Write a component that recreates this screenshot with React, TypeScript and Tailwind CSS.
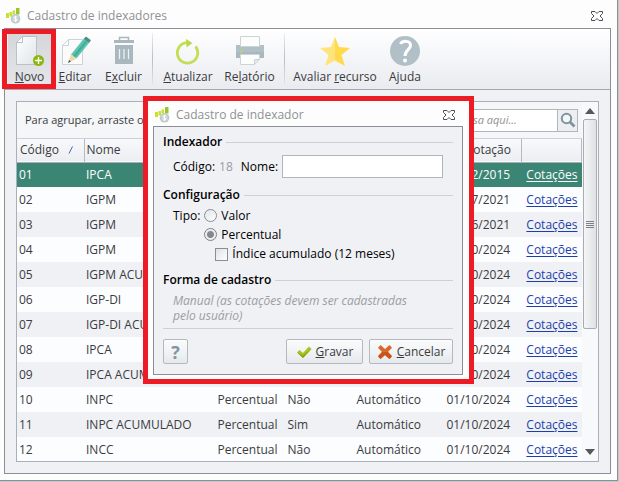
import type { ReactNode } from 'react';

type Row = {
  code: string;
  name: string;
  type: string;
  accumulated: string;
  update: string;
  date: string;
};

const rows: Row[] = [
  { code: '01', name: 'IPCA', type: 'Percentual', accumulated: 'Não', update: 'Automático', date: '01/12/2015' },
  { code: '02', name: 'IGPM', type: 'Percentual', accumulated: 'Não', update: 'Automático', date: '01/07/2021' },
  { code: '03', name: 'IGPM', type: 'Percentual', accumulated: 'Não', update: 'Automático', date: '01/06/2021' },
  { code: '04', name: 'IGPM', type: 'Percentual', accumulated: 'Não', update: 'Automático', date: '01/10/2024' },
  { code: '05', name: 'IGPM ACUMULADO', type: 'Percentual', accumulated: 'Sim', update: 'Automático', date: '01/10/2024' },
  { code: '06', name: 'IGP-DI', type: 'Percentual', accumulated: 'Não', update: 'Automático', date: '01/10/2024' },
  { code: '07', name: 'IGP-DI ACUMULADO', type: 'Percentual', accumulated: 'Sim', update: 'Automático', date: '01/10/2024' },
  { code: '08', name: 'IPCA', type: 'Percentual', accumulated: 'Não', update: 'Automático', date: '01/10/2024' },
  { code: '09', name: 'IPCA ACUMULADO', type: 'Percentual', accumulated: 'Sim', update: 'Automático', date: '01/10/2024' },
  { code: '10', name: 'INPC', type: 'Percentual', accumulated: 'Não', update: 'Automático', date: '01/10/2024' },
  { code: '11', name: 'INPC ACUMULADO', type: 'Percentual', accumulated: 'Sim', update: 'Automático', date: '01/10/2024' },
  { code: '12', name: 'INCC', type: 'Percentual', accumulated: 'Não', update: 'Automático', date: '01/10/2024' },
];

function LogoIcon() {
  return (
    <svg className="h-4 w-4 shrink-0" viewBox="0 0 16 16" aria-hidden="true">
      <path d="M0 5h3v5H0zM3.500 4H6v4.500H3.500zM6.500 2.500H9v4H6.500z" fill="#cbe02f" />
      <path d="M10 0h3.500v6.500H10z" fill="#9bc62a" />
      <circle cx="9.500" cy="10.800" r="4.800" fill="#bcc7cb" />
      <circle cx="9.500" cy="10.800" r="3.700" fill="#c9d2d6" />
      <path
        d="M11.200 9.200c-.6-.9-3.200-.9-3.200.4 0 1.500 3.200.8 3.200 2.300 0 1.300-2.600 1.300-3.400.3M9.500 7.800v6"
        fill="none"
        stroke="#fff"
        strokeWidth="1"
      />
    </svg>
  );
}

function CloseIcon() {
  return (
    <svg className="h-3 w-3" viewBox="0 0 12 12" aria-hidden="true">
      <path
        d="M.5 1.500h3.500L6 3.500l2-2h3.500v2L9 6l2.500 2.500v2H8l-2-2-2 2H.5v-2L3 6 .5 3.500z"
        fill="#fff"
        stroke="#4b5055"
        strokeWidth="1"
      />
    </svg>
  );
}

function NewIcon() {
  return (
    <svg className="h-8 w-8" viewBox="0 0 32 32" aria-hidden="true">
      <defs>
        <linearGradient id="paper" x1="0" y1="0" x2="1" y2="1">
          <stop offset="0" stopColor="#fff" />
          <stop offset="1" stopColor="#dfe4e8" />
        </linearGradient>
      </defs>
      <path d="M8.500 1.500h14v28h-20v-22z" fill="url(#paper)" stroke="#b7c3c9" />
      <path d="M8.500 1.500v6h-6z" fill="#fff" stroke="#b7c3c9" />
      <circle cx="24.500" cy="25.500" r="5.500" fill="#8ab70d" />
      <path d="M24.500 22v7M21 25.500h7" stroke="#fff" strokeWidth="1.400" />
    </svg>
  );
}

function EditIcon() {
  return (
    <svg className="h-8 w-8" viewBox="0 0 32 32" aria-hidden="true">
      <path d="M9.500 4.500h14v25h-20v-19z" fill="#fbfbfc" stroke="#cdd4d8" />
      <path d="M9.500 4.500v6h-6z" fill="#fff" stroke="#cdd4d8" />
      <path d="M12 19.500 24.500 4l5.500 4-12.500 15.500-5.500-4z" fill="#5ec4b3" />
      <path d="m14 21 12.500-15.500 1.800 1.300L16 22.500z" fill="#45ad9b" />
      <path d="M24.500 4 27 1.500l5 3.700-2 2.800z" fill="#4b8f86" />
      <path d="m12 19.500 5.500 4L9 28z" fill="#ecd6ae" />
      <path d="m10 25 2 1.500L9 28z" fill="#4a5458" />
    </svg>
  );
}

function TrashIcon() {
  return (
    <svg className="h-8 w-8" viewBox="0 0 32 32" aria-hidden="true">
      <path d="M11.500 5.500v-3h9v3" fill="none" stroke="#a9b7be" strokeWidth="1.500" />
      <path d="M6 5h20v3H6zM7 10h18v19H7z" fill="#a9b7be" />
      <path d="M11.500 14v10M16 14v10M20.500 14v10" stroke="#eef1f3" strokeWidth="1.300" />
    </svg>
  );
}

function RefreshIcon() {
  return (
    <svg className="h-8 w-8" viewBox="0 0 32 32" aria-hidden="true">
      <path d="M23.500 11.500A10.200 10.200 0 1 1 15 7.700" fill="none" stroke="#c3dd55" strokeWidth="2.800" />
      <path d="M14 4 20.500 8l-6 4.500z" fill="#bcd94a" />
    </svg>
  );
}

function PrinterIcon() {
  return (
    <svg className="h-8 w-8" viewBox="0 0 32 32" aria-hidden="true">
      <path d="M2 10h28v13H2z" fill="#b1bfc6" />
      <path d="M2 17h28v6H2z" fill="#a9b8bf" />
      <path d="M6.500 1.500h19v10h-19zM6.500 19.500h19v5l-5 5h-14z" fill="#fdfdfd" stroke="#ccd4d8" />
      <path d="M20.500 29.500v-5h5z" fill="#e6eaec" stroke="#ccd4d8" />
      <circle cx="7" cy="16.500" r="1.200" fill="#c2dc45" />
    </svg>
  );
}

function StarIcon() {
  return (
    <svg className="h-8 w-8" viewBox="0 0 32 32" aria-hidden="true">
      <path d="m16 2 4 10 11 1-8.500 7L26 31l-10-5.500z" fill="#ffdb4b" />
      <path d="M16 2 12 12 1 13l8.500 7L6 31l10-5.500z" fill="#ffe47d" />
    </svg>
  );
}

function HelpIcon() {
  return (
    <svg className="h-8 w-8" viewBox="0 0 32 32" aria-hidden="true">
      <circle cx="16" cy="16" r="15" fill="#b1c0c7" />
      <path
        d="M11.500 9c1.500-3.500 10-4 10 1.500 0 4-5.500 4.500-5.500 10.500"
        fill="none"
        stroke="#fff"
        strokeWidth="3"
      />
      <circle cx="16" cy="25.500" r="2" fill="#fff" />
    </svg>
  );
}

function SearchIcon() {
  return (
    <svg className="h-4 w-4" viewBox="0 0 16 16" aria-hidden="true">
      <circle cx="6.500" cy="6.500" r="4.700" fill="#f4f6f8" stroke="#7f959d" strokeWidth="2" />
      <path d="m10 10 4.500 4.500" stroke="#7f959d" strokeWidth="2.800" />
    </svg>
  );
}

function CheckIcon() {
  return (
    <svg className="h-4 w-4" viewBox="0 0 16 16" aria-hidden="true">
      <path d="M1 8.500 3.500 6 7 9l6-6.500L15.500 5 7 14z" fill="#a4c520" />
      <path d="m1 8.500 6 3 8.500-6.500L7 14z" fill="#86a80f" />
    </svg>
  );
}

function CancelIcon() {
  return (
    <svg className="h-4 w-4" viewBox="0 0 16 16" aria-hidden="true">
      <path
        d="m3.500 1 4.500 4 4.500-4L15 3.800 11 8l4 4.200-2.500 2.800L8 11l-4.500 4L1 12.200 5 8 1 3.800z"
        fill="#d9692b"
      />
      <path d="M5 8h6l4 4.200-2.500 2.800L8 11l-4.500 4L1 12.200z" fill="#c9541a" />
    </svg>
  );
}

function ToolButton({
  icon,
  width,
  pressed = false,
  children,
}: {
  icon: ReactNode;
  width: string;
  pressed?: boolean;
  children: ReactNode;
}) {
  return (
    <button
      type="button"
      className={`flex shrink-0 flex-col items-center gap-0.5 whitespace-nowrap pt-1.5 ${width} ${
        pressed ? 'bg-gradient-to-b from-[#d3d5d8] to-[#e6e7ea]' : ''
      }`}
    >
      {icon}
      <span className="leading-4">{children}</span>
    </button>
  );
}

function Separator() {
  return <div className="mx-1 my-1 w-px shrink-0 bg-gradient-to-b from-[#eceef1] via-[#b9bcc4] to-[#e3e5e9]" />;
}

function TitleBar({ title, height }: { title: string; height: string }) {
  return (
    <div className={`flex items-center justify-between ${height}`}>
      <div className="flex items-center gap-[5px]">
        <LogoIcon />
        <h2 className="text-[#8f9194]">{title}</h2>
      </div>
      <button type="button" aria-label="Fechar">
        <CloseIcon />
      </button>
    </div>
  );
}

function SectionTitle({ children }: { children: ReactNode }) {
  return (
    <div className="flex items-center gap-1">
      <h3 className="font-semibold leading-4 text-black">{children}</h3>
      <div className="h-px flex-1 bg-[#cfd1d6]" />
    </div>
  );
}

function Toolbar() {
  return (
    <div className="relative flex h-[61px] border-b border-[#a5a8b0] bg-gradient-to-b from-white to-[#e9ebf0] pl-[3px]">
      <ToolButton icon={<NewIcon />} width="w-[43px]" pressed>
        <u>N</u>ovo
      </ToolButton>
      <ToolButton icon={<EditIcon />} width="w-[48px]">
        <u>E</u>ditar
      </ToolButton>
      <ToolButton icon={<TrashIcon />} width="w-[49px]">
        E<u>x</u>cluir
      </ToolButton>
      <Separator />
      <ToolButton icon={<RefreshIcon />} width="w-[62px]">
        <u>A</u>tualizar
      </ToolButton>
      <ToolButton icon={<PrinterIcon />} width="w-[61px]">
        Re<u>l</u>atório
      </ToolButton>
      <Separator />
      <ToolButton icon={<StarIcon />} width="w-[92px]">
        Avaliar <u>r</u>ecurso
      </ToolButton>
      <ToolButton icon={<HelpIcon />} width="w-[48px]">
        Ajuda
      </ToolButton>
      {/* highlight around "Novo" */}
      <div className="pointer-events-none absolute -left-[3px] top-0 h-[60px] w-[54px] border-[5px] border-[#ed1c24]" />
    </div>
  );
}

function ScrollBar() {
  return (
    <div className="flex w-4 shrink-0 flex-col items-center bg-[#f8f9fa]">
      <div className="flex h-[17px] items-center">
        <svg className="h-1.5 w-2.5" viewBox="0 0 10 6" aria-hidden="true">
          <path d="M5 0l5 6H0z" fill="#55595e" />
        </svg>
      </div>
      <div className="flex h-[210px] w-3.5 items-center justify-center rounded-xs border border-[#a9acb3] bg-gradient-to-r from-[#f4f5f6] to-[#dfe1e4]">
        <div className="h-[7px] w-2 border-y border-[#7d8086] py-px">
          <div className="h-[3px] border-y border-[#7d8086]" />
        </div>
      </div>
      <div className="flex flex-1 items-end pb-1.5">
        <svg className="h-1.5 w-2.5" viewBox="0 0 10 6" aria-hidden="true">
          <path d="M0 0h10L5 6z" fill="#55595e" />
        </svg>
      </div>
    </div>
  );
}

function IndexTable() {
  return (
    <table className="w-full table-fixed border-collapse whitespace-nowrap text-left">
      <colgroup>
        <col className="w-[67px]" />
        <col />
        <col className="w-[70px]" />
        <col className="w-[69px]" />
        <col className="w-[90px]" />
        <col className="w-[77px]" />
        <col className="w-[60px]" />
      </colgroup>
      <thead>
        <tr className="h-[23px] border-b border-[#a9adb5] bg-gradient-to-b from-[#f8f9fb] to-[#eceef2] [&>th]:border-r [&>th]:border-[#b5b9c0] [&>th]:px-0.5 [&>th]:font-normal">
          <th>
            <span className="flex items-center justify-between pl-px pr-2">
              Código
              <svg className="h-2 w-1.5" viewBox="0 0 6 8" aria-hidden="true">
                <path d="M1 7.500 4.500.5" stroke="#4467b0" />
              </svg>
            </span>
          </th>
          <th>Nome</th>
          <th>Tipo</th>
          <th>Acumulado</th>
          <th>Atualização</th>
          <th className="text-right">
            <span className="block pr-2">Cotação</span>
          </th>
          <th />
        </tr>
      </thead>
      <tbody>
        {rows.map((row, i) => (
          <tr
            key={row.code}
            className={`h-[25px] [&>td]:overflow-hidden [&>td]:px-0.5 ${
              i === 0 ? 'bg-[#3b8575] text-white' : i % 2 ? 'bg-[#fcfdfe]' : 'bg-[#f0f1f5]'
            }`}
          >
            <td>{row.code}</td>
            <td>{row.name}</td>
            <td>{row.type}</td>
            <td>{row.accumulated}</td>
            <td>{row.update}</td>
            <td>{row.date}</td>
            <td className="text-right">
              <a href="#" className={`mr-0.5 underline underline-offset-2 ${i === 0 ? 'text-white' : 'text-[#1c3fae]'}`}>
                Cotações
              </a>
            </td>
          </tr>
        ))}
      </tbody>
    </table>
  );
}

function IndexDialog() {
  return (
    <div
      role="dialog"
      aria-label="Cadastro de indexador"
      className="w-[331px] border-[5px] border-[#ed1c24] bg-[#fdfdfd] pb-1 pl-[5px] pr-1.5 text-black"
    >
      <TitleBar title="Cadastro de indexador" height="h-[25px] pl-0.5 pr-2 pt-0.5" />
      <form className="border border-[#8b8e96] bg-[#f0f1f5] px-[9px] pb-2.5 pt-[7px]">
        <SectionTitle>Indexador</SectionTitle>
        <div className="flex items-center gap-1 pb-[9px] pl-2.5 pr-2.5 pt-[5px]">
          <span>Código:</span>
          <span className="text-[#9a9ca0]">18</span>
          <label htmlFor="nome" className="pl-1">
            Nome:
          </label>
          <input
            id="nome"
            type="text"
            className="h-[23px] min-w-0 flex-1 border border-[#b1b5bc] bg-white px-1 outline-none"
          />
        </div>
        <SectionTitle>Configuração</SectionTitle>
        <div className="flex gap-1 pb-2 pl-2.5 pt-[3px]">
          <span className="leading-[19px]">Tipo:</span>
          <div className="flex flex-col">
            <label className="flex items-center gap-1 leading-[19px]">
              <input
                type="radio"
                name="tipo"
                className="h-[13px] w-[13px] appearance-none rounded-full border border-[#8a8d94] bg-gradient-to-br from-[#e2e4e7] to-white"
              />
              Valor
            </label>
            <label className="flex items-center gap-1 leading-[19px]">
              <input
                type="radio"
                name="tipo"
                defaultChecked
                className="h-[13px] w-[13px] appearance-none rounded-full border border-[#7d8087] bg-white bg-[radial-gradient(circle,#85888e_0_3px,#eceef0_4px)]"
              />
              Percentual
            </label>
            <label className="flex items-center gap-1 pl-[11px] leading-5">
              <input
                type="checkbox"
                className="h-[13px] w-[13px] appearance-none border border-[#8a8d94] bg-gradient-to-br from-[#dfe1e4] to-white"
              />
              Índice acumulado (12 meses)
            </label>
          </div>
        </div>
        <SectionTitle>Forma de cadastro</SectionTitle>
        <p className="ml-[10px] w-[250px] py-[5px] italic leading-[15px] text-[#9b9da1]">
          Manual (as cotações devem ser cadastradas pelo usuário)
        </p>
        <div className="flex gap-1.5 border-t border-[#cfd1d6] pt-2.5 text-[#3a3b3e]">
          <button
            type="button"
            aria-label="Ajuda"
            className="mr-auto h-[25px] w-[25px] rounded-xs border border-[#b4b8bf] bg-gradient-to-b from-[#fbfcfc] to-[#e6e9ec] text-lg font-bold leading-5 text-[#82959e]"
          >
            ?
          </button>
          <button
            type="submit"
            className="flex h-[25px] w-[77px] items-center justify-center gap-1 rounded-xs border border-[#b4b8bf] bg-gradient-to-b from-[#fbfcfc] to-[#e6e9ec]"
          >
            <CheckIcon />
            <span>
              <u>G</u>ravar
            </span>
          </button>
          <button
            type="button"
            className="flex h-[25px] w-[84px] items-center justify-center gap-1 rounded-xs border border-[#b4b8bf] bg-gradient-to-b from-[#fbfcfc] to-[#e6e9ec]"
          >
            <CancelIcon />
            <span>
              <u>C</u>ancelar
            </span>
          </button>
        </div>
      </form>
    </div>
  );
}

export default function App() {
  return (
    <div className="min-h-screen bg-[#b9cfc9] pr-px font-['Open_Sans',sans-serif] text-[12px] leading-4 text-[#3a3b3e]">
      <div className="relative border-b border-r border-[#8b8e96] bg-[#fdfdfd] pb-1.5 pl-1 pr-1.5">
        <TitleBar title="Cadastro de indexadores" height="h-7 pl-0.5 pr-2 pt-1" />
        <div className="border border-[#8b8e96] bg-[#f0f1f5]">
          <Toolbar />
          <main className="p-[11px]">
            <div className="flex h-[361px] overflow-hidden border border-[#a9b0ba] bg-[#f4f6f8]">
              <div className="min-w-0 flex-1">
                <div className="flex h-[37px] items-center justify-between border-b border-[#cdd0d6] pl-2 pr-1">
                  <span className="text-[11px]">Para agrupar, arraste o cabeçalho aqui</span>
                  <div className="flex h-[23px] border border-[#b1b5bc] bg-white">
                    <input
                      type="text"
                      aria-label="Pesquisar"
                      placeholder="Pesquisa aqui..."
                      className="w-[120px] px-1 text-[11px] italic outline-none placeholder:text-[#8f9194]"
                    />
                    <button
                      type="button"
                      aria-label="Pesquisar"
                      className="flex w-5 items-center justify-center border-l border-[#b1b5bc] bg-[#eceef2]"
                    >
                      <SearchIcon />
                    </button>
                  </div>
                </div>
                <IndexTable />
              </div>
              <ScrollBar />
            </div>
          </main>
        </div>
        <div className="absolute inset-0 flex items-center justify-center">
          <IndexDialog />
        </div>
      </div>
    </div>
  );
}
